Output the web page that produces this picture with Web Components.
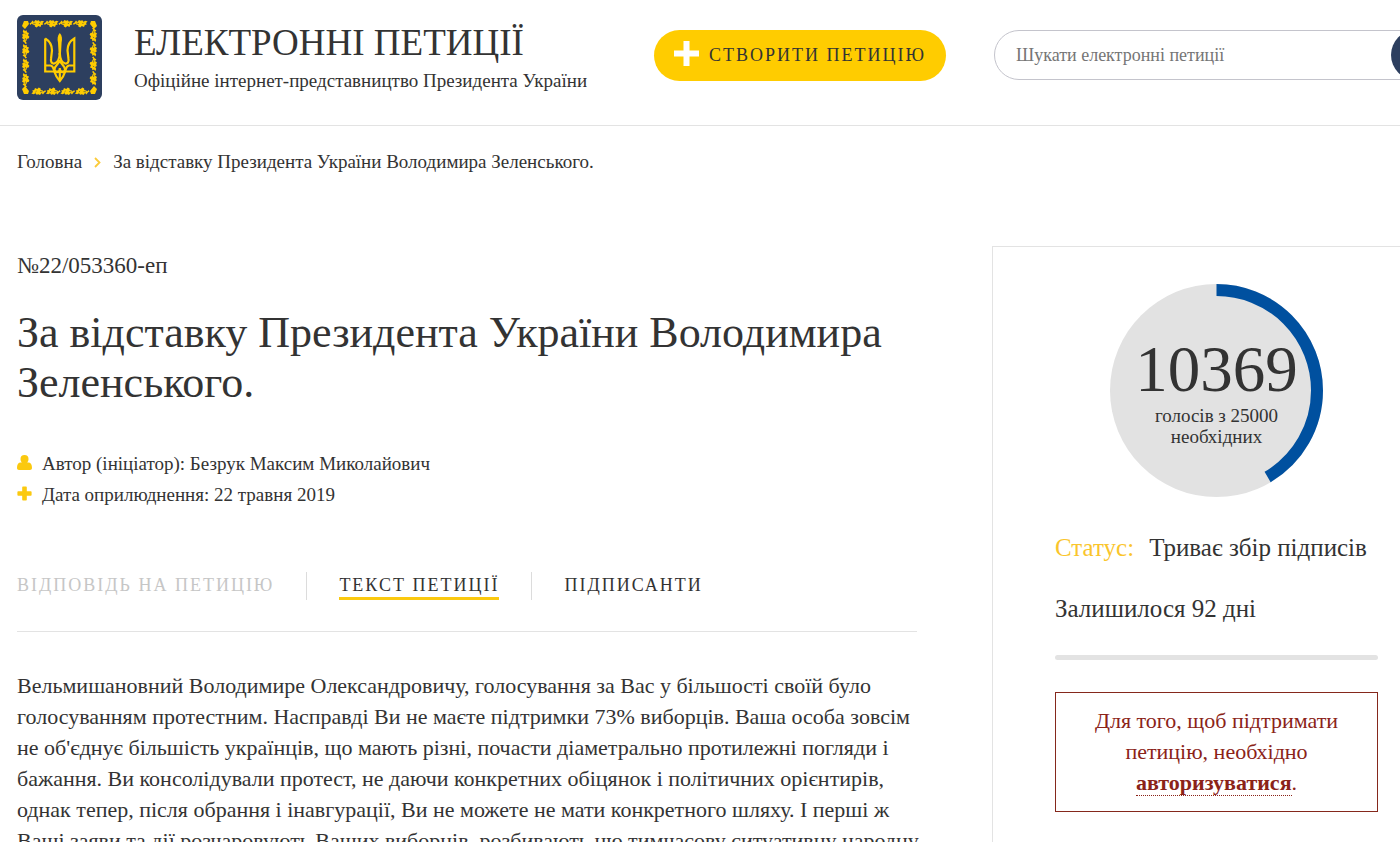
<!DOCTYPE html>
<html lang="uk">
<head>
<meta charset="utf-8">
<title>Електронні петиції</title>
<style>
  html { scrollbar-width: none; }
  body {
    margin: 0;
    background: #fff;
    color: #333;
    font-family: Georgia, "Liberation Serif", serif;
    font-size: 18px;
    overflow-x: hidden;
    --yellow: #fc0;
    --navy: #2d3f5f;
    --line: #e3e3e3;
    --overhang: -41px;
  }
</style>
</head>
<body>
<petition-page></petition-page>

<template id="site-logo">
  <style>
    :host { display: block; flex: none; width: 85px; height: 85px; }
    svg { display: block; width: 100%; height: 100%; }
  </style>
  <svg viewBox="0 0 85 85" role="img" aria-label="Герб України">
    <defs>
      <g id="leaf" fill="#fc0">
        <path d="M0 3.400 1.600 2.600 3 .6 4.400 2 6 0 7.600 .8 9.400 .2 10.400 1.800 12.400 .8 14.600 1.600 13 3 13.800 4.600 11.800 5 11 7 8.800 6 7.200 7.400 5.400 6.600 5.200 5 3.200 4.400 2.400 3.600 .8 5Z"/>
        <path d="M3.600 3.200 6 3.400M10.600 2.800 9.400 4" fill="none" stroke="#2d3f5f" stroke-width=".6"/>
      </g>
      <g id="band">
        <use href="#leaf" x="12.500" y="5"/><use href="#leaf" x="27" y="5"/><use href="#leaf" x="41.500" y="5"/><use href="#leaf" x="56" y="5"/>
      </g>
    </defs>
    <rect width="85" height="85" rx="6" fill="#2d3f5f"/>
    <use href="#band"/>
    <use href="#band" transform="rotate(90 42.500 42.500)"/>
    <use href="#band" transform="rotate(180 42.500 42.500)"/>
    <use href="#band" transform="rotate(270 42.500 42.500)"/>
    <path d="M5 11l2-5 4 0 1 3-4 5zM80 11l-2-5-4 0-1 3 4 5zM5 74l2 5 4 0 1-3-4-5zM80 74l-2 5-4 0-1-3 4-5z" fill="#fc0"/>
    <g fill="none" stroke="#fc0" stroke-width="2.200" stroke-linejoin="miter">
      <path d="M28.200 23.500V56.500H57.300V23.500C53 26 50.500 30 50.500 35.500L51.500 44C52 47 50.500 48.800 48.200 48.500C44.500 47.500 43 43 42.800 38"/>
      <path d="M28.200 23.500C32.500 26 35 30 35 35.500L34 44C33.500 47 35 48.800 37.300 48.500C41 47.500 42.500 43 42.800 38"/>
      <path d="M28.500 50.500H33.500C36.500 51 36.500 54 37.500 57C38.500 60.500 40.500 63.500 42.800 66C45 63.500 47 60.500 48 57C49 54 49 51 52 50.500H57"/>
      <path d="M42.800 45C41.500 50 37.500 50.500 37.500 54.500C38 58.500 42.800 58 42.800 53.500C42.800 58 47.600 58.500 48 54.500C48 50.500 44 50 42.800 45ZM42.800 53V65"/>
    </g>
    <path d="M42.800 18C45.200 20.500 45.400 24 44.600 27.500L43.900 40H41.700L41 27.500C40.200 24 40.400 20.500 42.800 18Z" fill="#fc0"/>
  </svg>
</template>

<template id="site-header">
  <style>
    :host { display: block; border-bottom: 1px solid var(--line); }
    header { display: flex; align-items: flex-start; padding: 15px 0 25px 17px; margin-right: var(--overhang); }
    .brand { flex: 1; margin-left: 32px; padding-top: 7px; white-space: nowrap; }
    .name { font-size: 37px; line-height: 42px; }
    .sub { font-size: 19px; line-height: 24px; margin-top: 5px; }
    button { font: inherit; border: 0; cursor: pointer; }
    .create { display: flex; align-items: center; justify-content: center; gap: 10px; width: 292px; height: 51px; margin: 15px 48px 0 0; padding: 0; border-radius: 26px; background: var(--yellow); color: #333; font-size: 18px; letter-spacing: 2px; white-space: nowrap; }
    .create svg { width: 25px; height: 25px; margin-bottom: 4px; }
    form { box-sizing: border-box; display: flex; width: 447px; height: 50px; margin-top: 15px; border: 1px solid #c4c4cc; border-radius: 25px; }
    input { flex: 1; min-width: 0; border: 0; outline: 0; background: none; padding: 0 0 0 21px; font: inherit; font-size: 18px; color: #333; }
    input::placeholder { color: #757575; opacity: 1; }
    .go { width: 50px; height: 50px; margin: -1px; border-radius: 50%; background: var(--navy); }
  </style>
  <header>
    <site-logo></site-logo>
    <div class="brand">
      <div class="name">ЕЛЕКТРОННІ ПЕТИЦІЇ</div>
      <div class="sub">Офіційне інтернет-представництво Президента України</div>
    </div>
    <button class="create" type="button">
      <svg viewBox="0 0 25 25" aria-hidden="true"><path d="M9.500 0h6v9.500H25v6h-9.500V25h-6v-9.500H0v-6h9.500z" fill="#fff"/></svg>
      <span>СТВОРИТИ ПЕТИЦІЮ</span>
    </button>
    <form role="search">
      <input type="search" aria-label="Пошук" placeholder="Шукати електронні петиції">
      <button class="go" type="button" aria-label="Знайти"></button>
    </form>
  </header>
</template>

<template id="bread-crumbs">
  <style>
    :host { display: block; padding: 24px 17px 0; }
    nav { display: flex; align-items: center; gap: 12px; font-size: 19px; line-height: 24px; }
    a { color: inherit; text-decoration: none; }
    svg { width: 7px; height: 11px; }
  </style>
  <nav>
    <a href="#">Головна</a>
    <svg viewBox="0 0 7 11" aria-hidden="true"><path d="M1 1l4.500 4.500L1 10" fill="none" stroke="#fbcb3a" stroke-width="1.800"/></svg>
    <span>За відставку Президента України Володимира Зеленського.</span>
  </nav>
</template>

<template id="petition-tabs">
  <style>
    :host { display: block; border-bottom: 1px solid var(--line); }
    nav { display: flex; padding-bottom: 31px; }
    a { color: inherit; text-decoration: none; font-size: 18px; line-height: 26px; letter-spacing: 2px; white-space: nowrap; height: 25px; }
    .on { border-bottom: 3px solid #fbc90f; }
    .off { color: #c6c6c6; }
    i { width: 1px; height: 28px; margin: 0 32px; background: #dcdcdc; }
  </style>
  <nav>
    <a class="off" href="#">ВІДПОВІДЬ НА ПЕТИЦІЮ</a><i></i>
    <a class="on" href="#">ТЕКСТ ПЕТИЦІЇ</a><i></i>
    <a href="#">ПІДПИСАНТИ</a>
  </nav>
</template>

<template id="petition-article">
  <style>
    :host { display: block; }
    .num { font-size: 23px; line-height: 24px; padding-top: 8px; }
    h1 { margin: 30px 0 0; font-size: 44px; line-height: 50px; font-weight: 400; }
    ul { list-style: none; margin: 40px 0 62px; padding: 0; font-size: 19px; line-height: 31px; }
    li { display: flex; align-items: center; gap: 10px; }
    li svg { width: 15px; height: 15px; margin-bottom: 3px; }
    p { margin: 38px 0 0; font-size: 22px; line-height: 31px; white-space: nowrap; }
  </style>
  <article>
    <div class="num">№22/053360-еп</div>
    <h1>За відставку Президента України Володимира Зеленського.</h1>
    <ul>
      <li><svg viewBox="0 0 15 15" aria-hidden="true"><path d="M7.500 0a4 4 0 0 1 4 4c0 1.400-.5 2.700-1.300 3.500C13.600 7 15 9 15 13c0 1.300-.8 2-2 2H2c-1.200 0-2-.7-2-2 0-4 1.400-6 4.800-5.500A4.800 4.800 0 0 1 3.500 4a4 4 0 0 1 4-4z" fill="#fbc90f"/></svg><span>Автор (ініціатор): Безрук Максим Миколайович</span></li>
      <li><svg viewBox="0 0 15 15" aria-hidden="true"><path d="M6 .500h3q.8 0 .8.800V5.200h4q.8 0 .8.800v3q0 .8-.8.800h-4v4q0 .8-.8.800H6q-.8 0-.8-.8v-4h-4Q.4 9.800.4 9V6q0-.8.800-.8h4V1.300q0-.8.800-.8z" fill="#fbc90f"/></svg><span>Дата оприлюднення: 22 травня 2019</span></li>
    </ul>
    <petition-tabs></petition-tabs>
    <p>Вельмишановний Володимире Олександровичу, голосування за Вас у більшості своїй було<br>голосуванням протестним. Насправді Ви не маєте підтримки 73% виборців. Ваша особа зовсім<br>не об'єднує більшість українців, що мають різні, почасти діаметрально протилежні погляди і<br>бажання. Ви консолідували протест, не даючи конкретних обіцянок і політичних орієнтирів,<br>однак тепер, після обрання і інавгурації, Ви не можете не мати конкретного шляху. І перші ж<br>Ваші заяви та дії розчаровують Ваших виборців, розбивають цю тимчасову ситуативну народну</p>
  </article>
</template>

<template id="vote-ring">
  <style>
    :host { display: grid; width: 213px; height: 213px; margin: 0 auto; }
    svg, div { grid-area: 1 / 1; }
    svg { width: 213px; height: 213px; }
    div { z-index: 1; text-align: center; padding-top: 49px; font-size: 19px; line-height: 21px; }
    strong { display: block; font-weight: 400; font-size: 65px; line-height: 72px; }
    span { display: block; }
  </style>
  <svg viewBox="0 0 213 213" aria-hidden="true">
    <circle cx="106.500" cy="106.500" r="106.500" fill="#e2e2e2"/>
    <circle cx="106.500" cy="106.500" r="100.500" fill="none" stroke="#00509f" stroke-width="12" pathLength="100" stroke-dasharray="41.500 58.500" transform="rotate(-90 106.500 106.500)"/>
  </svg>
  <div><strong>10369</strong><span>голосів з 25000</span><span>необхідних</span></div>
</template>

<template id="status-panel">
  <style>
    :host { display: block; box-sizing: border-box; border: 1px solid var(--line); padding: 37px 62px 60px; }
    .row { display: flex; gap: 15px; font-size: 25px; line-height: 30px; margin-top: 36px; white-space: nowrap; }
    .left { margin-top: 31px; }
    .key { color: #fac52c; }
    .bar { height: 5px; margin: 31px 0 32px; border-radius: 3px; background: #e3e3e3; }
    .notice { border: 1px solid #85281c; padding: 12px 20px 13px; color: #8b2318; text-align: center; font-size: 22px; line-height: 31px; }
    .notice a { color: inherit; font-weight: 700; text-decoration: none; border-bottom: 1px dotted #8b2318; }
  </style>
  <vote-ring></vote-ring>
  <div class="row"><span class="key">Статус:</span><span>Триває збір підписів</span></div>
  <div class="row left">Залишилося 92 дні</div>
  <div class="bar"></div>
  <div class="notice">Для того, щоб підтримати<br>петицію, необхідно<br><a href="#">авторизуватися</a>.</div>
</template>

<template id="petition-page">
  <style>
    :host { display: block; overflow-x: clip; }
    main { display: grid; grid-template-columns: minmax(0, 1fr) 449px; gap: 75px; margin: 72px var(--overhang) 0 0; padding-left: 17px; }
  </style>
  <site-header></site-header>
  <bread-crumbs></bread-crumbs>
  <main>
    <petition-article></petition-article>
    <status-panel></status-panel>
  </main>
</template>

<script>
  const define = (name) => customElements.define(name, class extends HTMLElement {
    constructor() {
      super();
      this.attachShadow({ mode: "open" })
        .append(document.getElementById(name).content.cloneNode(true));
    }
  });
  ["site-logo", "site-header", "bread-crumbs", "petition-tabs", "petition-article",
   "vote-ring", "status-panel", "petition-page"].forEach(define);
</script>
</body>
</html>
